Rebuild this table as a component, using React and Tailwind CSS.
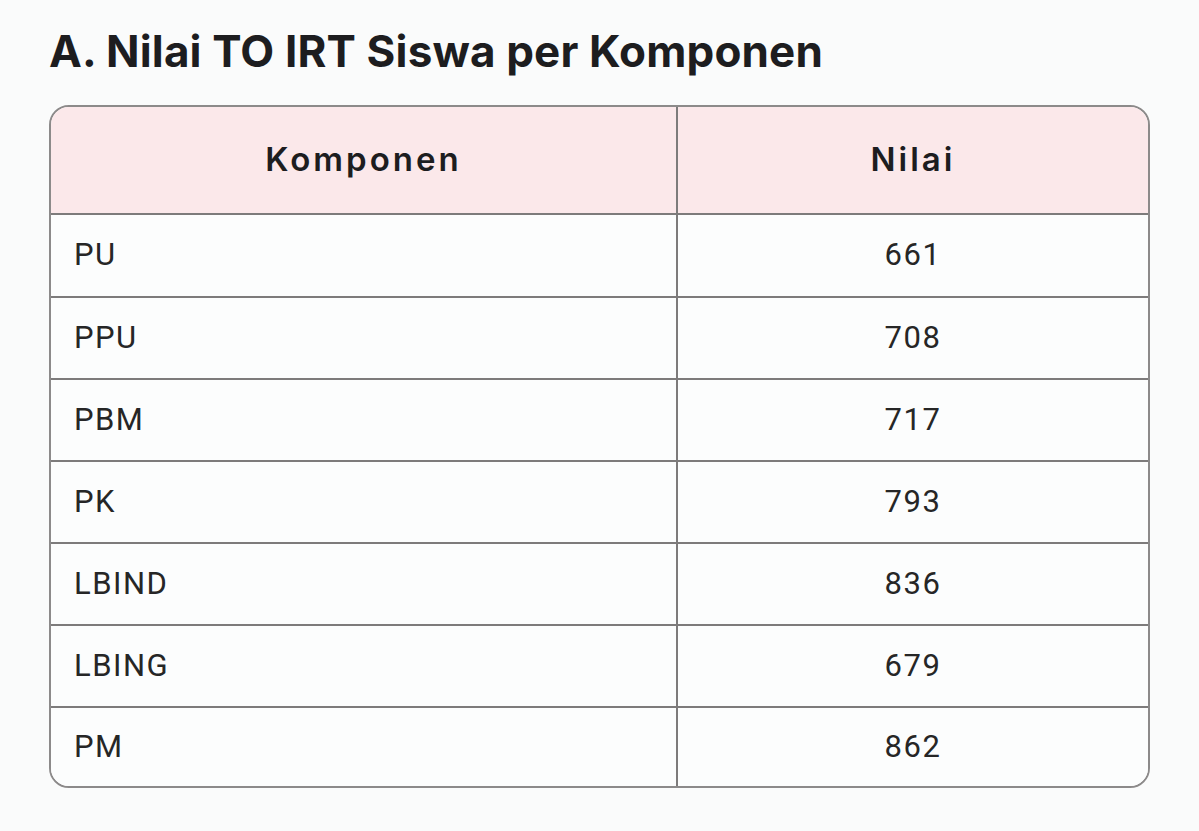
const rows = [
  ["PU", "661"],
  ["PPU", "708"],
  ["PBM", "717"],
  ["PK", "793"],
  ["LBIND", "836"],
  ["LBING", "679"],
  ["PM", "862"],
];

export default function App() {
  return (
    <div className="min-h-[831px] bg-[#fafbfb] px-[49px] pt-[26px] text-[#1d1d1f]">
      <h1 className="font-['Inter',sans-serif] text-[44px] font-bold leading-[50px] tracking-[0.15px]">
        A. Nilai TO IRT Siswa per Komponen
      </h1>
      <div className="mt-[29px] w-[1101px] overflow-hidden rounded-[20px] border-2 border-[#8c8a8a]">
        <div className="grid h-[106px] grid-cols-[627px_1fr] bg-[#fbe8ea] font-['Inter',sans-serif] text-[33px] font-semibold tracking-[3px]">
          <div className="flex items-center justify-center border-r-2 border-[#7d7b7b]">
            Komponen
          </div>
          <div className="flex items-center justify-center">Nilai</div>
        </div>
        {rows.map((row, i) => (
          <div
            key={row[0]}
            className={
              "grid grid-cols-[627px_1fr] border-t-2 border-[#7d7b7b] bg-[#fcfdfd] font-['Roboto',sans-serif] text-[31px] tracking-[1.5px] text-[#262626] " +
              (i === 0 ? "h-[83px]" : i === rows.length - 1 ? "h-[80px]" : "h-[82px]")
            }
          >
            <div className="flex items-center border-r-2 border-[#7d7b7b] pl-[23px]">
              {row[0]}
            </div>
            <div className="flex items-center justify-center">{row[1]}</div>
          </div>
        ))}
      </div>
    </div>
  );
}
